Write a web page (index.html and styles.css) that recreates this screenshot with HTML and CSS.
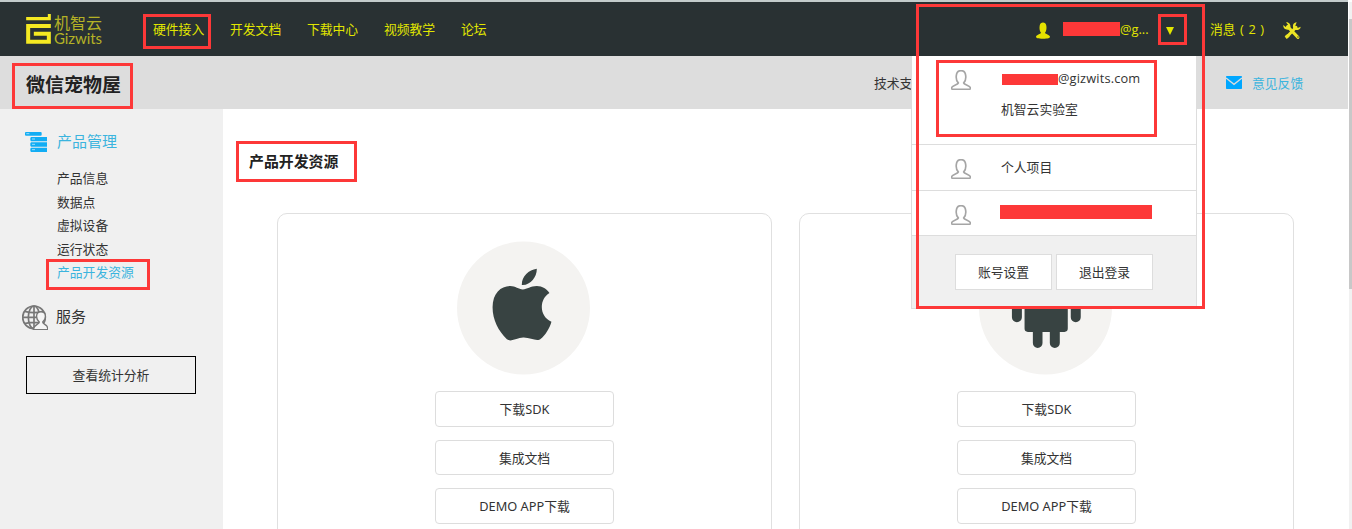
FILE: index.html
```html
<!DOCTYPE html>
<html lang="zh-CN">
<head>
<meta charset="utf-8">
<title>微信宠物屋</title>
<link rel="stylesheet" href="styles.css">
</head>
<body>
<svg width="0" height="0" class="defs">
  <symbol id="person" viewBox="0 0 60 60"><path d="M22 39C14 32 15 24 16 16C17 6 22 2 30 2S43 6 44 16C45 24 46 32 38 39C39 44 57 46 58 53C59 58 56 58 53 58H7C4 58 1 58 2 53C3 46 21 44 22 39Z"/></symbol>
</svg>
<div class="page">
  <header class="topbar">
    <div class="logo">
      <svg class="logo-mark" viewBox="0 0 74 90"><path d="M0 9H65V0H74V19H0ZM0 30H74V42H12V77H62V65H23V53H74V89H0Z"/></svg>
      <div class="logo-text"><span class="logo-cn">机智云</span><span class="logo-en">Gizwits</span></div>
    </div>
    <nav class="nav"><a>硬件接入</a><a>开发文档</a><a>下载中心</a><a>视频教学</a><a>论坛</a></nav>
    <div class="account">
      <svg class="user-icon" viewBox="0 0 42 50"><path d="M15 32C10 26 10 18 11 11C12 4 16 1 21 1S30 4 31 11C32 18 32 26 27 32C28 36 41 38 42 44C42 48 36 50 21 50S0 48 0 44C1 38 14 36 15 32Z"/></svg>
      <span class="redact redact-top"></span><span class="mail">@g...</span>
      <svg class="caret" viewBox="0 0 8 8"><path d="M0 0H8L4 8Z"/></svg>
      <span class="messages">消息 ( 2 )</span>
      <svg class="tools" viewBox="0 0 54 54"><g fill="none" stroke-linecap="round"><path d="M14 14L45 46" stroke-width="9"/><path d="M12 44L39 16" stroke-width="9"/></g><path d="M1 9L8 15L15 8L9 1C18 0 24 8 22 17L16 23C7 24 0 18 1 9ZM53 14L44 18L37 11L41 1C31 2 28 10 31 19L37 24C45 25 53 22 53 14Z"/><path d="M5 43L13 36L20 43L11 51Z"/><circle class="rivet" cx="45" cy="45" r="2"/></svg>
    </div>
  </header>
  <div class="subbar">
    <h1>微信宠物屋</h1>
    <span class="support">技术支持</span>
    <svg class="envelope" viewBox="0 0 48 39"><rect width="48" height="39" rx="2"/><path d="M0 6L24 25L48 6" fill="none"/></svg>
    <a class="feedback">意见反馈</a>
  </div>
  <div class="body">
    <aside class="sidebar">
      <div class="group active">
        <svg class="stack-icon" viewBox="0 0 66 60"><path d="M3 0H47Q50 0 50 3V8Q50 11 47 11H3Q0 11 0 8V3Q0 0 3 0ZM18 15H66V28H18L16 25V18ZM18 31H66V44H18L16 41V34ZM18 47H66V60H18L16 57V50Z"/><path class="slots" d="M4 5H13M21 21H30M21 37H30M21 53H30"/></svg>
        <span>产品管理</span>
      </div>
      <ul class="menu"><li>产品信息</li><li>数据点</li><li>虚拟设备</li><li>运行状态</li><li class="current">产品开发资源</li></ul>
      <div class="group service">
        <svg class="globe-icon" viewBox="0 0 78 75"><g fill="none" stroke="#777" stroke-width="5"><circle cx="36" cy="37" r="34"/><ellipse cx="36" cy="37" rx="17" ry="34"/><path d="M36 3V71M2 37H70M8 19Q36 27 64 19M8 56Q36 48 64 56"/></g><path d="M52 51C43 44 43 34 45 27C47 18 67 18 69 27C71 34 71 44 62 51C62 59 77 57 77 70V74H34C35 58 52 59 52 51Z" fill="#f5f5f5" stroke="#777" stroke-width="4"/></svg>
        <span>服务</span>
      </div>
      <a class="stats">查看统计分析</a>
    </aside>
    <main class="main">
      <h2>产品开发资源</h2>
      <div class="cards">
        <section class="card">
          <svg class="platform" viewBox="51 33 400 402"><circle cx="251" cy="234" r="200"/><path d="M291 116C292 140 272 167 246 165C245 140 266 119 291 116ZM249 178C262 178 272 168 291 168C308 168 321 177 329 189C297 208 298 260 335 275C329 297 316 315 304 326C292 338 272 322 250 323C230 323 216 338 201 328C176 304 158 270 158 232C158 190 183 168 211 168C227 168 236 178 249 178Z"/></svg>
          <a>下载SDK</a><a>集成文档</a><a>DEMO APP下载</a>
        </section>
        <section class="card">
          <svg class="platform" viewBox="117 -147 400 402"><circle cx="317" cy="54" r="200"/><path d="M254 -5H384V116Q384 126 374 126H360V159A15 15 0 0 1 330 159V126H308V159A14.5 15 0 0 1 279 159V126H264Q254 126 254 116ZM216 10A15 15 0 0 1 246 10V82A15 15 0 0 1 216 82ZM393 10A15 15 0 0 1 423 10V82A15 15 0 0 1 393 82ZM254 -13A65 60 0 0 1 384 -13Z"/></svg>
          <a>下载SDK</a><a>集成文档</a><a>DEMO APP下载</a>
        </section>
      </div>
    </main>
  </div>
</div>
<div class="scrollbar"><div class="thumb"></div></div>
<div class="dropdown">
  <div class="item first"><svg class="outline"><use href="#person"/></svg><div class="identity"><div class="address"><span class="redact redact-mail"></span>@gizwits.com</div><div class="org">机智云实验室</div></div></div>
  <div class="item second"><svg class="outline"><use href="#person"/></svg><span>个人项目</span></div>
  <div class="item third"><svg class="outline"><use href="#person"/></svg><span class="redact redact-project"></span></div>
  <div class="actions"><a>账号设置</a><a>退出登录</a></div>
</div>
<div class="mark mark-nav"></div>
<div class="mark mark-title"></div>
<div class="mark mark-heading"></div>
<div class="mark mark-menu"></div>
<div class="mark mark-dropdown"></div>
<div class="mark mark-caret"></div>
<div class="mark mark-identity"></div>
</body>
</html>
```
FILE: styles.css
```css
* { box-sizing: border-box; }
body { margin: 0; height: 529px; overflow: hidden; position: relative; background: #fff; color: #333; font: 12.8px/20px "Open Sans", "Noto Sans CJK SC", sans-serif; }
h1, h2, ul { margin: 0; padding: 0; }
svg { display: block; flex: none; }
.defs { position: absolute; }
.page { width: 1348px; }
.topbar { height: 56px; border-top: 2px solid #c3cbcb; background: #293133; color: #e1e600; display: flex; align-items: flex-start; white-space: nowrap; }
.logo { display: flex; width: 153px; padding: 12px 0 0 26px; gap: 3px; }
.logo-mark { width: 25px; height: 30px; fill: #f5e922; }
.logo-text { display: flex; flex-direction: column; padding-top: 2px; color: #b4b126; }
.logo-cn { font-size: 16px; line-height: 15px; }
.logo-en { font: 15px/15px Lato, sans-serif; letter-spacing: -0.1px; }
.nav { display: flex; gap: 25.8px; padding-top: 17px; }
.account { display: flex; align-items: flex-start; margin-left: auto; padding: 17px 47px 0 0; }
.user-icon { width: 14px; height: 17px; margin: 3px 13px 0 0; fill: #e5e100; }
.redact { display: block; background: #fd3838; flex: none; }
.redact-top { width: 57px; height: 14px; margin-top: 3px; }
.mail { width: 46px; }
.caret { width: 8px; height: 8px; margin-top: 8px; fill: #e1e600; }
.messages { width: 73px; margin-left: 36px; word-spacing: 1.2px; }
.tools { width: 18px; height: 18px; margin-top: 3px; fill: #ece425; stroke: #ece425; }
.tools > path, .tools .rivet { stroke: none; }
.tools .rivet { fill: #293133; }
.subbar { height: 53px; background: #ddd; display: flex; padding-left: 26px; }
.subbar h1 { width: 848px; color: #222; font-size: 19px; line-height: 59px; }
.support { width: 351px; line-height: 54px; }
.envelope { width: 16px; height: 13px; margin: 20px 10px 0 1px; fill: #00a7ff; stroke: #ddd; stroke-width: 4px; }
.envelope rect { stroke: none; }
.feedback { color: #3bb4de; line-height: 54px; }
.body { display: flex; height: 420px; }
.sidebar { width: 223px; background: #f0f0f0; padding-top: 22px; }
.group { display: flex; font-size: 15px; align-items: flex-start; }
.active { padding-left: 25px; color: #3bb4de; gap: 10px; }
.stack-icon { width: 22px; height: 20px; margin-top: 1px; fill: #12adf4; }
.slots { fill: none; stroke: #9bddf9; stroke-width: 3px; }
.menu { list-style: none; padding: 15px 0 0 57px; line-height: 23.5px; }
.current { color: #3bb4de; }
.service { padding: 20px 0 0 22px; gap: 8px; }
.service svg { width: 26px; height: 25px; }
.service span { padding-top: 1px; }
.stats { display: block; width: 170px; height: 38px; margin: 26px 0 0 26px; border: 1px solid #000; text-align: center; line-height: 36px; }
.main { width: 1125px; padding-top: 42px; }
.main h2 { padding-left: 26px; color: #222; font-size: 14.9px; line-height: 20px; }
.cards { display: flex; gap: 27px; padding: 42px 0 0 54px; }
.card { width: 495px; height: 340px; border: 1px solid #e0e0e0; border-radius: 10px; padding-top: 27px; display: flex; flex-direction: column; align-items: center; gap: 13px; }
.platform { width: 133px; height: 134px; margin: 0 2px 3px 0; fill: #384342; }
.platform circle { fill: #f4f3f1; }
.card a { width: 179px; height: 35.5px; border: 1px solid #ddd; border-radius: 4px; line-height: 35px; text-align: center; font-family: "Noto Sans", "Noto Sans CJK SC", sans-serif; }
.scrollbar { position: absolute; left: 1349px; top: 2px; width: 3px; height: 527px; padding-top: 17px; background: #f1f1f1; }
.thumb { height: 270px; background: #c8c8c8; }
.dropdown { position: absolute; left: 911px; top: 56px; width: 286px; height: 253px; background: #fff; border: 1px solid #ddd; border-top: 0; }
.item { display: flex; padding-left: 39px; border-bottom: 1px solid #ddd; }
.outline { width: 20px; height: 20px; margin-right: 30px; fill: none; stroke: #a5a5a5; stroke-width: 5px; overflow: visible; }
.first { height: 89px; padding-top: 14px; }
.identity { margin-top: -3px; }
.identity .address { display: flex; height: 31px; line-height: 22px; letter-spacing: 0.15px; }
.identity .org { line-height: 22px; }
.redact-mail { width: 56px; height: 11px; margin: 7px 0 0 1px; }
.second { height: 46px; padding-top: 14px; }
.second span { margin-top: -2px; }
.third { height: 45px; padding-top: 14px; }
.redact-project { width: 152px; height: 14px; margin-left: -1px; }
.actions { display: flex; height: 72px; background: #f0f0f0; padding: 18px 0 0 43px; gap: 4px; }
.actions a { width: 97px; height: 36px; border: 1px solid #ddd; background: #fff; text-align: center; line-height: 35px; }
.mark { position: absolute; border: 3px solid #fd3838; }
.mark-nav { left: 143px; top: 14px; width: 68px; height: 35px; }
.mark-title { left: 12px; top: 63px; width: 121px; height: 46px; }
.mark-heading { left: 236px; top: 141px; width: 121px; height: 41px; }
.mark-menu { left: 46px; top: 259px; width: 104px; height: 31px; }
.mark-dropdown { left: 916px; top: 4px; width: 289px; height: 305px; }
.mark-caret { left: 1158px; top: 14px; width: 29px; height: 31px; }
.mark-identity { left: 936px; top: 60px; width: 221px; height: 77px; }
```
